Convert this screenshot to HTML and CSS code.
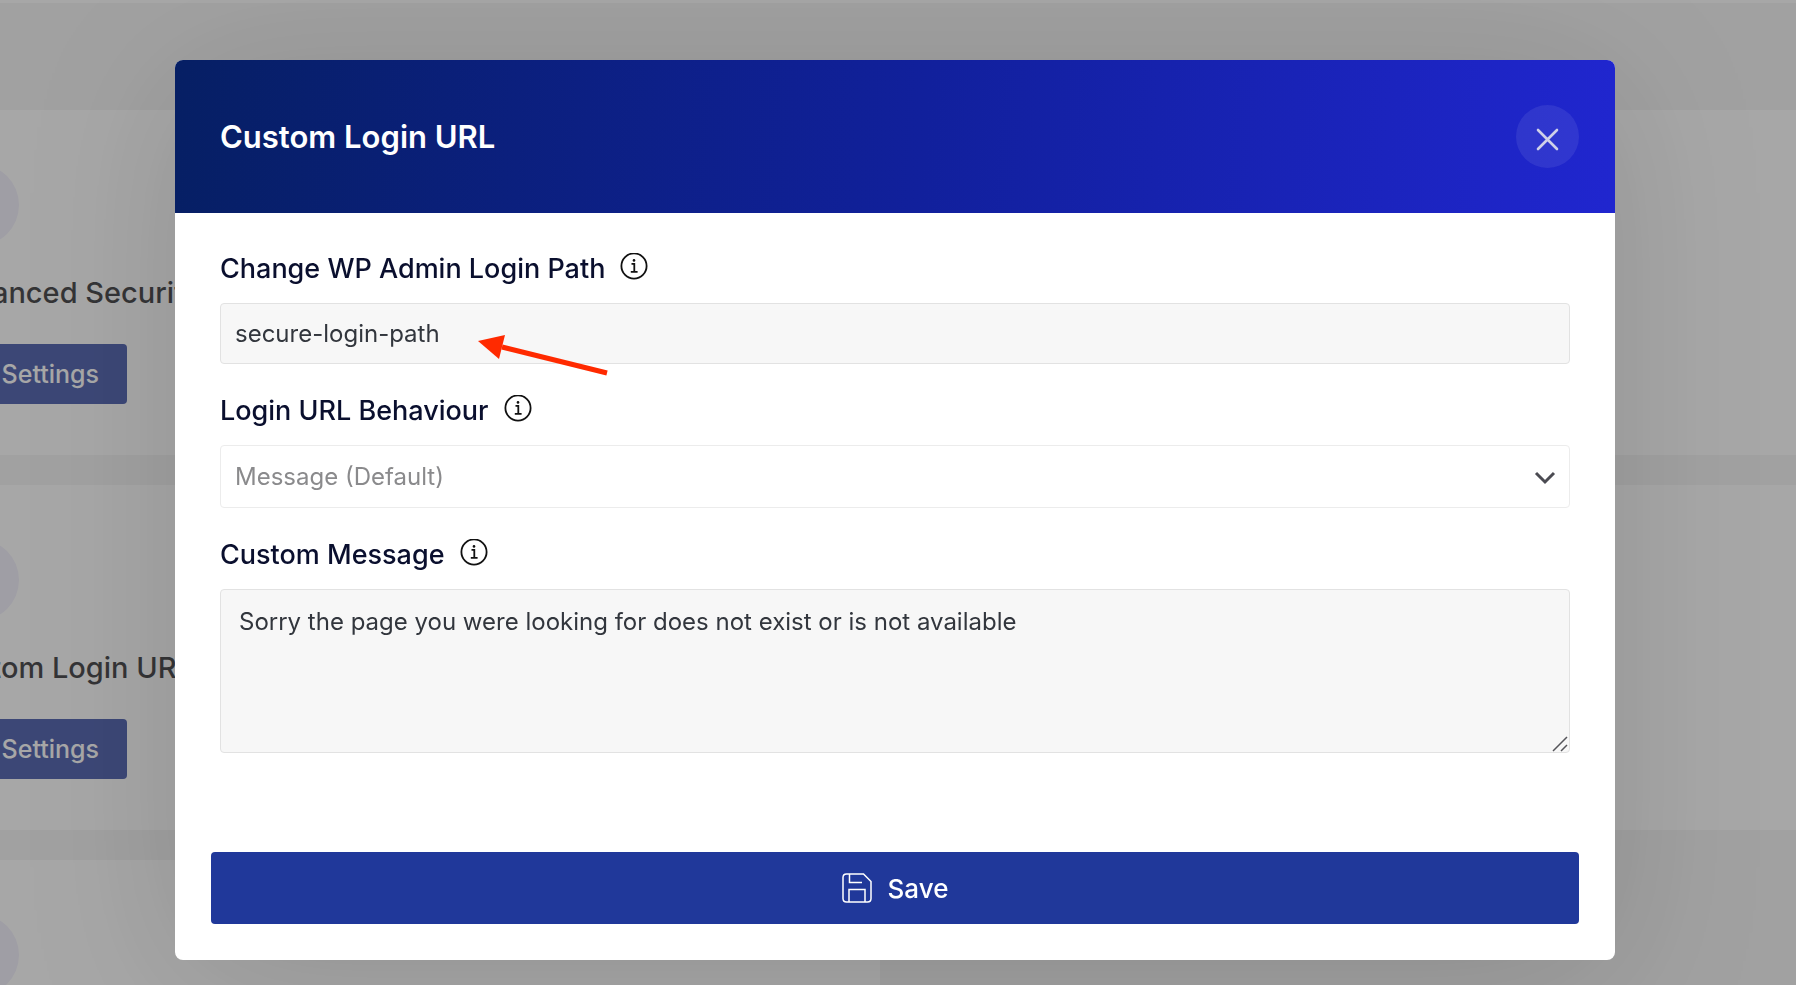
FILE: index.html
```html
<!DOCTYPE html>
<html lang="en">
<head>
  <meta charset="UTF-8">
  <meta name="viewport" content="width=device-width, initial-scale=1.0">
  <title>Custom Login URL</title>
  <link rel="stylesheet" href="styles.css">
</head>
<body>

  <!-- Settings page behind the popup -->
  <main class="page">
    <div class="cards">
      <section class="card">
        <div class="card-icon"></div>
        <h2>Advanced Security</h2>
        <button class="settings-btn" type="button">Settings</button>
      </section>
      <section class="card"></section>
      <section class="card">
        <div class="card-icon"></div>
        <h2>Custom Login URL</h2>
        <button class="settings-btn" type="button">Settings</button>
      </section>
      <section class="card"></section>
      <section class="card">
        <div class="card-icon"></div>
      </section>
    </div>
  </main>

  <div class="overlay">
    <div class="modal" role="dialog" aria-labelledby="modalTitle">
      <header class="modal-header">
        <h1 id="modalTitle">Custom Login URL</h1>
        <button class="close-btn" type="button" aria-label="Close">
          <svg width="24" height="24" viewBox="0 0 24 24"><path d="M2 2L21 21M21 2L2 21"/></svg>
        </button>
      </header>

      <form class="modal-body">
        <div class="field">
          <div class="label-row">
            <label for="loginPath">Change WP Admin Login Path</label>
            <svg class="info" viewBox="0 0 28 28"><circle cx="14" cy="13" r="12.6"/><path d="M11.5 10.8H14.3V18.6M10.8 18.8H17.6"/><circle class="dot" cx="14" cy="7.4" r="1.3"/></svg>
          </div>
          <div class="control">
            <input type="text" id="loginPath" value="secure-login-path">
            <svg class="arrow" width="130" height="44" viewBox="0 0 130 44"><path class="line" d="M24 13L129 39"/><path class="head" d="M0 7L27 1L21 25Z"/></svg>
          </div>
        </div>

        <div class="field">
          <div class="label-row">
            <label for="behaviour">Login URL Behaviour</label>
            <svg class="info" viewBox="0 0 28 28"><circle cx="14" cy="13" r="12.6"/><path d="M11.5 10.8H14.3V18.6M10.8 18.8H17.6"/><circle class="dot" cx="14" cy="7.4" r="1.3"/></svg>
          </div>
          <div class="control">
            <select id="behaviour">
              <option>Message (Default)</option>
            </select>
            <svg class="chevron" width="22" height="14" viewBox="0 0 22 14"><path d="M2 2L11 11L20 2"/></svg>
          </div>
        </div>

        <div class="field">
          <div class="label-row">
            <label for="message">Custom Message</label>
            <svg class="info" viewBox="0 0 28 28"><circle cx="14" cy="13" r="12.6"/><path d="M11.5 10.8H14.3V18.6M10.8 18.8H17.6"/><circle class="dot" cx="14" cy="7.4" r="1.3"/></svg>
          </div>
          <div class="control">
            <textarea id="message">Sorry the page you were looking for does not exist or is not available</textarea>
            <svg class="grip" width="16" height="16" viewBox="0 0 16 16"><path d="M1 15L15 1M9 15L15 9"/></svg>
          </div>
        </div>

        <button class="save-btn" type="submit">
          <svg width="30" height="30" viewBox="0 0 30 30"><path d="M4.5 1H21.5L29 8.5V25.5Q29 29 25.5 29H4.5Q1 29 1 25.5V4.5Q1 1 4.5 1ZM7.5 1V9.5H20M7 29V16.5H23V29"/></svg>
          Save
        </button>
      </form>
    </div>
  </div>

</body>
</html>
```

FILE: styles.css
```css
* {
  box-sizing: border-box;
}
body {
  margin: 0;
  height: 100vh;
  overflow: hidden;
  font-family: Inter, "Liberation Sans", sans-serif;
  background-color: #f2f2f2;
}
h1, h2 {
  margin: 0;
  font-weight: 500;
}
button, input, select, textarea {
  font-family: inherit;
}
svg {
  fill: none;
}

/* page behind the popup */
.page {
  height: 100%;
  overflow: hidden;
  margin-left: -104px;
  border-top: 3px solid #ffffff;
}
.cards {
  display: grid;
  grid-template-columns: 984px 1fr;
  gap: 30px;
  padding-top: 107px;
}
.card {
  height: 345px;
  padding: 54px 41px;
  background-color: #ffffff;
}
.card:nth-child(even) {
  margin-right: -40px;
}
.card-icon {
  width: 82px;
  height: 82px;
  border-radius: 50%;
  background-color: #efecfb;
}
.card h2 {
  margin-top: 27px;
  font-size: 29px;
  line-height: 40px;
  color: #101014;
}
.settings-btn {
  width: 190px;
  height: 60px;
  margin-top: 31px;
  padding: 0 28px;
  border: none;
  border-radius: 4px;
  background-color: #20389a;
  color: #ffffff;
  font-size: 25px;
  font-weight: 500;
  text-align: right;
}

/* popup */
.overlay {
  position: fixed;
  inset: 0;
  padding: 60px 181px 25px 175px;
  background-color: rgba(86, 86, 86, 0.52);
}
.modal {
  border-radius: 8px;
  overflow: hidden;
  background-color: #ffffff;
  box-shadow: 0 20px 160px rgba(0, 0, 0, 0.13);
}
.modal-header {
  display: flex;
  align-items: center;
  justify-content: space-between;
  height: 153px;
  padding: 0 36px 0 45px;
  background: linear-gradient(94deg, #061f64, #11209c 52%, #2026cf);
}
.modal-header h1 {
  font-size: 31px;
  font-weight: 600;
  line-height: 40px;
  color: #ffffff;
}
.close-btn {
  display: flex;
  align-items: center;
  justify-content: center;
  width: 63px;
  height: 63px;
  padding: 6px 0 0;
  border: none;
  border-radius: 50%;
  background-color: rgba(255, 255, 255, 0.08);
  cursor: pointer;
}
.close-btn svg {
  stroke: #cfd0e8;
  stroke-width: 2.6;
  stroke-linecap: round;
}
.modal-body {
  padding: 40px 36px 36px;
}
.field {
  margin: 0 9px 31px;
}
.label-row {
  display: flex;
  gap: 15px;
  margin-bottom: 18px;
}
.label-row label {
  font-size: 27px;
  font-weight: 500;
  line-height: 32px;
  color: #0a0f2e;
}
.info {
  width: 28px;
  height: 28px;
  stroke: #111111;
  stroke-width: 1.8;
}
.info .dot {
  fill: #111111;
  stroke: none;
}
.control {
  position: relative;
}
.control input, .control select, .control textarea {
  display: block;
  width: 100%;
  border: 1px solid #e2e2e2;
  border-radius: 4px;
  background-color: #f7f7f7;
  color: #32363d;
  font-size: 24px;
}
.control input {
  height: 61px;
  padding: 0 14px;
}
.control select {
  height: 63px;
  padding: 0 14px;
  appearance: none;
  border-color: #ececec;
  background-color: #ffffff;
  color: #8a8a8c;
}
.control textarea {
  height: 164px;
  padding: 16px 18px;
  line-height: 32px;
  resize: vertical;
}
.control textarea::-webkit-resizer {
  display: none;
}
.chevron {
  position: absolute;
  right: 14px;
  top: 26px;
  stroke: #4b4b52;
  stroke-width: 3;
}
.grip {
  position: absolute;
  right: 2px;
  bottom: 1px;
  stroke: #55555a;
  stroke-width: 1.5;
  pointer-events: none;
}
.arrow {
  position: absolute;
  left: 258px;
  top: 31px;
  pointer-events: none;
}
.arrow .line {
  stroke: #ff2a00;
  stroke-width: 5;
}
.arrow .head {
  fill: #ff2a00;
}
.save-btn {
  display: flex;
  align-items: center;
  justify-content: center;
  gap: 16px;
  width: 100%;
  height: 72px;
  margin-top: 99px;
  border: none;
  border-radius: 4px;
  background-color: #20389a;
  color: #ffffff;
  font-size: 26px;
  font-weight: 500;
  cursor: pointer;
}
.save-btn svg {
  stroke: #ffffff;
  stroke-width: 1.5;
}
```
